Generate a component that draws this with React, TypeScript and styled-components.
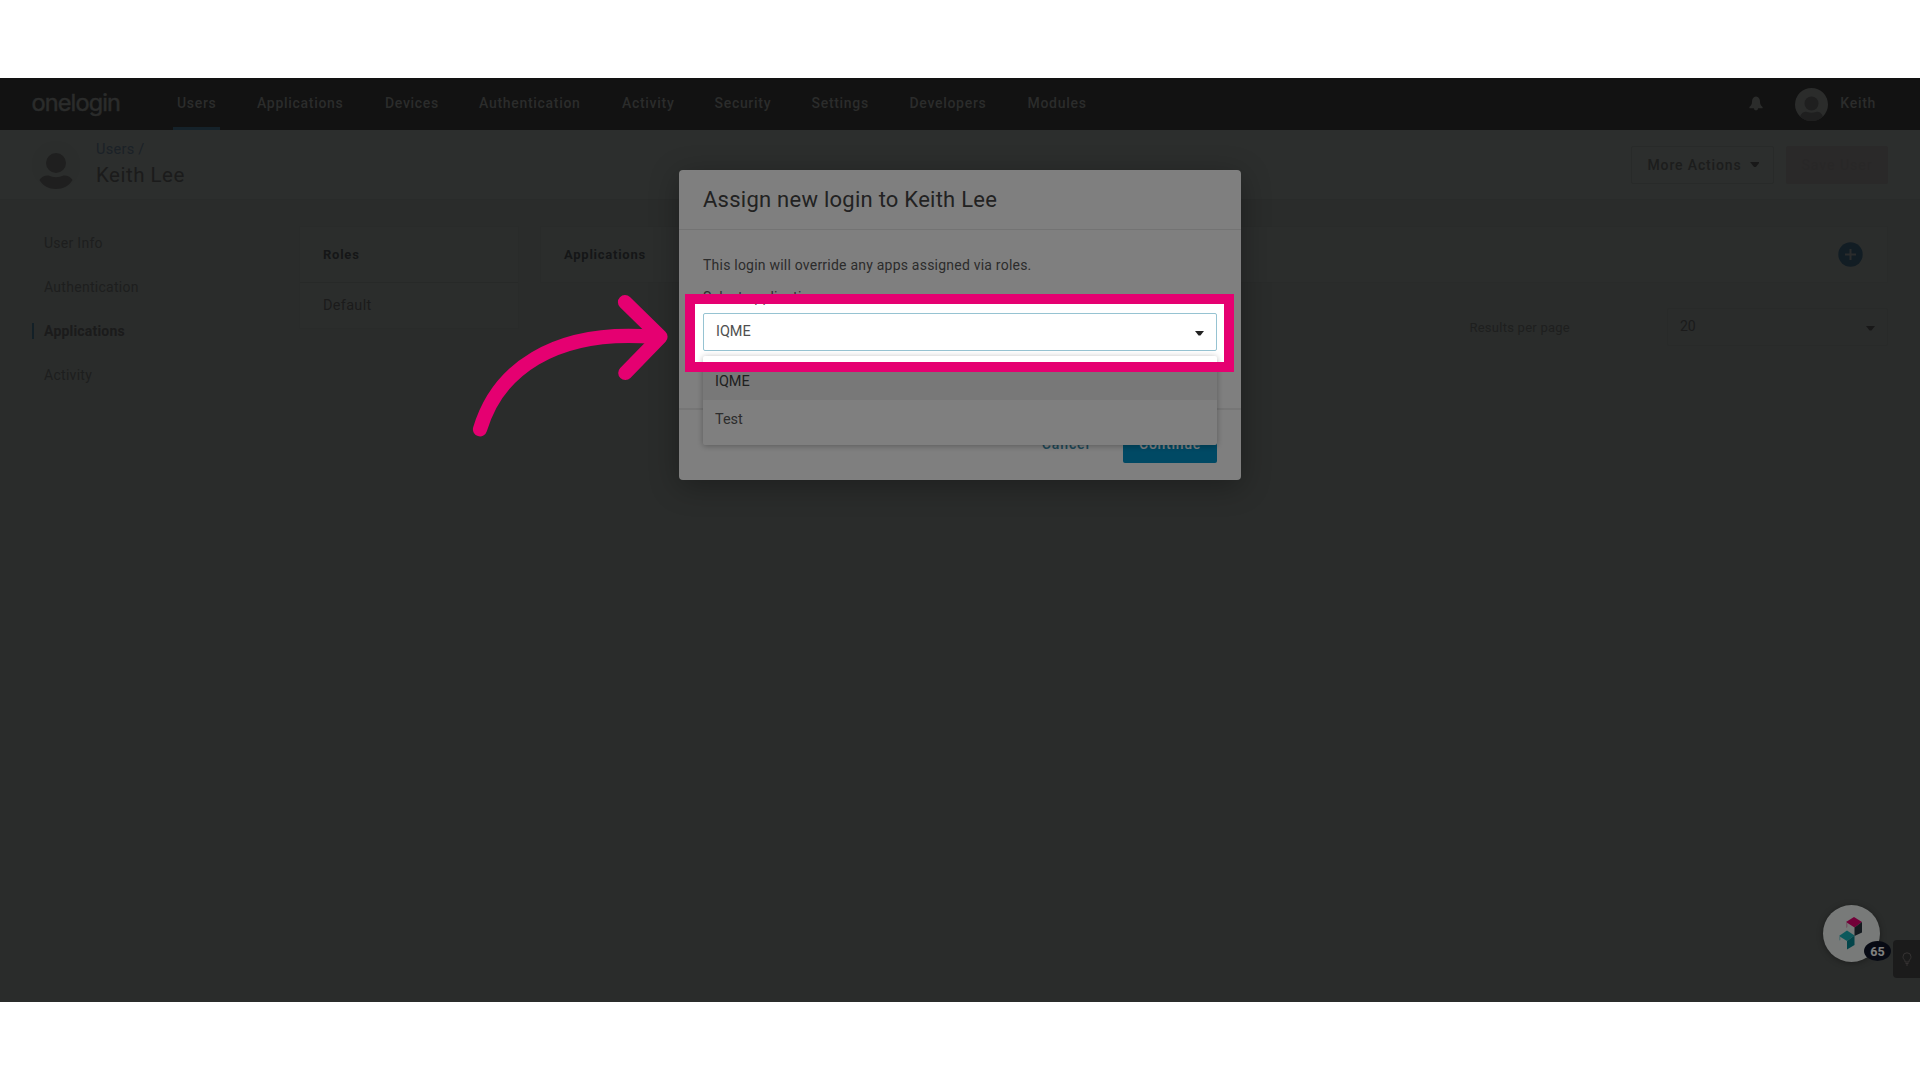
import React from "react";
import styled, { createGlobalStyle } from "styled-components";

const GlobalStyle = createGlobalStyle`
  * { box-sizing: border-box; }
  body { margin: 0; background: #fff; font-family: Roboto, "Liberation Sans", sans-serif; }
`;

const Page = styled.div`
  height: 1080px;
  padding: 78px 0;
  overflow: hidden;
`;

const Stage = styled.div`
  position: relative;
  height: 924px;
  overflow: hidden;
  background: #545856;
  display: flex;
  flex-direction: column;
`;

const TopBar = styled.header`
  height: 52px;
  background: #242424;
  display: flex;
  align-items: stretch;
  padding-left: 31px;
  padding-right: 44px;
  color: #565857;
`;

const Logo = styled.svg`
  width: 92px;
  height: 52px;
  flex: none;
  margin-right: 50px;
`;

const Nav = styled.nav`
  display: flex;
  gap: 33px;
  flex: 1;
`;

const NavItem = styled.a<{ $width: number; $active?: boolean }>`
  width: ${(p) => p.$width}px;
  padding: 0 0 0 4px;
  display: flex;
  align-items: center;
  font-size: 14px;
  font-weight: 500;
  letter-spacing: 0.7px;
  white-space: nowrap;
  border-bottom: 3px solid ${(p) => (p.$active ? "#2b4454" : "transparent")};
`;

const Account = styled.div`
  display: flex;
  align-items: center;
  font-size: 14px;
  font-weight: 500;
  letter-spacing: 0.7px;
  padding-bottom: 2px;
  svg { display: block; }
`;

const Bell = styled.svg`
  width: 14px;
  height: 15px;
  margin: 0 32px 0 0;
`;

const SmallAvatar = styled.svg`
  width: 33px;
  height: 33px;
  margin: 3px 12px 0 0;
`;

const SubHeader = styled.div`
  height: 70px;
  background: #585c5a;
  border-bottom: 1px solid #525654;
  display: flex;
  align-items: center;
  padding: 0 32px;
`;

const Avatar = styled.svg`
  width: 48px;
  height: 48px;
  margin-right: 16px;
`;

const Titles = styled.div`
  flex: 1;
  display: flex;
  flex-direction: column;
  padding-top: 1px;
`;

const Crumb = styled.div`
  font-size: 14.5px;
  line-height: 20px;
  letter-spacing: 0.3px;
  color: #36424e;
`;

const UserName = styled.div`
  font-size: 20.5px;
  line-height: 31px;
  letter-spacing: 0.5px;
  color: #363737;
`;

const Button = styled.div<{ $muted?: boolean }>`
  height: 38px;
  width: ${(p) => (p.$muted ? 102 : 143)}px;
  margin-left: ${(p) => (p.$muted ? 12 : 0)}px;
  padding-left: ${(p) => (p.$muted ? 0 : 2)}px;
  border: 1px solid ${(p) => (p.$muted ? "#555252" : "#515553")};
  background: ${(p) => (p.$muted ? "#555252" : "transparent")};
  color: ${(p) => (p.$muted ? "#504f4f" : "#383a39")};
  font-size: 14px;
  font-weight: ${(p) => (p.$muted ? 400 : 500)};
  letter-spacing: ${(p) => (p.$muted ? 1 : 0.85)}px;
  display: flex;
  align-items: center;
  justify-content: center;
  gap: 9px;
  border-radius: 2px;
`;

const Caret = styled.span<{ $color: string }>`
  width: 9px;
  height: 5px;
  background: ${(p) => p.$color};
  clip-path: polygon(0 0, 100% 0, 100% 10%, 60% 100%, 40% 100%, 0 10%);
`;

const Body = styled.div`
  flex: 1;
  display: flex;
  align-items: flex-start;
  padding: 26px 32px 0;
`;

const SideNav = styled.ul`
  list-style: none;
  margin: 9px 0 0;
  padding: 0;
  width: 267px;
  display: flex;
  flex-direction: column;
  gap: 28px;
`;

const SideItem = styled.li<{ $active?: boolean }>`
  height: 16px;
  line-height: 16px;
  padding-left: 10px;
  border-left: 2px solid ${(p) => (p.$active ? "#27404f" : "transparent")};
  color: ${(p) => (p.$active ? "#363636" : "#3b3d3c")};
  font-size: 14px;
  font-weight: ${(p) => (p.$active ? 700 : 400)};
  letter-spacing: ${(p) => (p.$active ? 0.2 : 0.28)}px;
`;

const Card = styled.section<{ $width: number }>`
  width: ${(p) => p.$width}px;
  border: 1px solid #525654;
  background: #575b59;
`;

const CardHead = styled.div`
  height: 55px;
  padding: 0 24px 0 23px;
  display: flex;
  align-items: center;
  justify-content: space-between;
  color: #2a2d2f;
  font-size: 13px;
  font-weight: 700;
  letter-spacing: 0.75px;
`;

const RoleRow = styled.div`
  height: 46px;
  border-top: 1px solid #4f5351;
  padding: 0 23px;
  line-height: 46px;
  font-size: 14.5px;
  letter-spacing: 0.3px;
  color: #363636;
`;

const Main = styled.div`
  margin-left: 21px;
`;

const Pager = styled.div`
  margin-top: 25px;
  display: flex;
  align-items: center;
  justify-content: flex-end;
`;

const PagerLabel = styled.span`
  font-size: 13px;
  letter-spacing: 0.25px;
  color: #3c3e3d;
  margin-right: 97px;
  padding-top: 1px;
`;

const PagerSelect = styled.div`
  width: 221px;
  height: 38px;
  border: 1px solid #505452;
  border-radius: 2px;
  padding: 0 12px;
  display: flex;
  align-items: center;
  justify-content: space-between;
  font-size: 14px;
  color: #363636;
  ${Caret} { margin-top: 2px; }
`;

const Value = styled.span`
  padding-bottom: 2px;
`;

const Modal = styled.div`
  position: absolute;
  left: 679px;
  top: 92px;
  width: 562px;
  height: 310px;
  background: #fff;
  border-radius: 4px;
  box-shadow: 0 6px 30px rgba(0, 0, 0, 0.3);
  color: #585858;
  display: flex;
  flex-direction: column;
`;

const ModalTitle = styled.h2`
  margin: 0;
  height: 60px;
  padding: 0 24px;
  line-height: 59px;
  font-size: 22px;
  font-weight: 400;
  letter-spacing: 0.25px;
  color: #444;
  border-bottom: 1px solid #e6e6e6;
`;

const ModalBody = styled.div`
  height: 180px;
  padding: 25px 24px 0;
  border-bottom: 2px solid #ececec;
  font-size: 14px;
  letter-spacing: 0.22px;
`;

const Line = styled.div<{ $top?: number }>`
  height: 20px;
  line-height: 20px;
  margin-top: ${(p) => p.$top ?? 0}px;
`;

const Select = styled.div`
  margin-top: 6px;
  height: 38px;
  border: 1px solid #96c3d2;
  border-radius: 2px;
  padding: 0 12px;
  display: flex;
  align-items: center;
  justify-content: space-between;
  color: #4f4f4f;
  font-size: 14.5px;
  letter-spacing: -0.05px;
  ${Caret} { margin-top: 2px; }
`;

const ModalFooter = styled.div`
  flex: 1;
  padding: 15px 24px 0;
  display: flex;
  justify-content: flex-end;
  gap: 33px;
  font-size: 14px;
  letter-spacing: 0.9px;
  font-weight: 500;
  line-height: 38px;
`;

const Cancel = styled.span`
  color: #3d8fae;
`;

const Continue = styled.span`
  width: 94px;
  height: 38px;
  background: #0093c9;
  color: #fff;
  border-radius: 2px;
  text-align: center;
  letter-spacing: 0.7px;
`;

const Menu = styled.div`
  position: absolute;
  left: 24px;
  top: 186px;
  width: 514px;
  height: 89px;
  padding: 6px 0;
  background: #fff;
  border-radius: 2px;
  box-shadow: 0 1px 6px rgba(0, 0, 0, 0.3);
`;

const Option = styled.div<{ $selected?: boolean }>`
  height: 38px;
  line-height: 39px;
  padding-left: 12px;
  font-size: 14.5px;
  letter-spacing: -0.05px;
  background: ${(p) => (p.$selected ? "#f0f0f0" : "transparent")};
  color: ${(p) => (p.$selected ? "#404040" : "#5a5a5a")};
`;

const Spotlight = styled.div`
  position: absolute;
  left: 685px;
  top: 216px;
  width: 549px;
  height: 78px;
  border: 10px solid #e50071;
  box-shadow: 0 0 0 2000px rgba(0, 0, 0, 0.5);
`;

const Arrow = styled.svg`
  position: absolute;
  left: 460px;
  top: 202px;
  width: 240px;
  height: 170px;
`;

const ChatBubble = styled.div`
  position: absolute;
  left: 1823px;
  top: 827px;
  width: 57px;
  height: 57px;
  border-radius: 50%;
  background: #f0f4f2;
  box-shadow: 0 1px 6px rgba(0, 0, 0, 0.35);
`;

const Count = styled.span`
  position: absolute;
  left: 41px;
  top: 36px;
  width: 27px;
  height: 20px;
  border-radius: 50%;
  background: #0f1528;
  color: #fff;
  font-size: 12.5px;
  font-weight: 700;
  line-height: 21px;
  text-align: center;
`;

const Tip = styled.div`
  position: absolute;
  right: 0;
  top: 862px;
  width: 27px;
  height: 38px;
  border-radius: 4px 0 0 4px;
  background: #363737;
  display: flex;
  align-items: center;
  justify-content: center;
`;

const NAV = [
  { label: "Users", width: 47, active: true },
  { label: "Applications", width: 95 },
  { label: "Devices", width: 61 },
  { label: "Authentication", width: 110 },
  { label: "Activity", width: 59.5 },
  { label: "Security", width: 64 },
  { label: "Settings", width: 65 },
  { label: "Developers", width: 85 },
  { label: "Modules", width: 67 },
];

const SIDE = ["User Info", "Authentication", "Applications", "Activity"];

export default function App() {
  return (
    <Page>
      <GlobalStyle />
      <Stage>
        <TopBar>
          <Logo viewBox="0 0 92 52">
            <text x="0.5" y="32.500" fill="currentColor" stroke="currentColor" strokeWidth="0.500"
              fontFamily="Inter, sans-serif" fontSize="23.500" textLength="89.500">onelogin</text>
          </Logo>
          <Nav>
            {NAV.map((n) => (
              <NavItem key={n.label} $width={n.width} $active={n.active}>{n.label}</NavItem>
            ))}
          </Nav>
          <Account>
            <Bell viewBox="0 0 14 15" fill="#565857">
              <path d="M7 0.5C4.2 0.8 3 3 3 5.6C3 8.6 2 9.6 0.4 11V12.2H13.6V11C12 9.6 11 8.6 11 5.6C11 3 9.8 0.8 7 0.5Z" />
              <path d="M4.8 12H9.2A2.2 2.4 0 0 1 4.8 12Z" />
            </Bell>
            <SmallAvatar viewBox="0 0 33 33">
              <circle cx="16.5" cy="16.5" r="16.5" fill="#565857" />
              <circle cx="16.5" cy="15.5" r="7" fill="#3e3e3e" />
              <path d="M5 28.4C7 24 10 23 12 24Q16.5 25.5 21 24C23 23 26 24 28 28.4A16.5 16.5 0 0 1 5 28.4Z" fill="#3e3e3e" />
            </SmallAvatar>
            Keith
          </Account>
        </TopBar>
        <SubHeader>
          <Avatar viewBox="0 0 48 48">
            <circle cx="24" cy="24" r="24" fill="#575b59" />
            <circle cx="24" cy="22" r="10" fill="#3e3e3e" />
            <path d="M7.4 39C9 36 13 34 16.5 34.5Q24 38 31.500 34.500C35 34 39 36 40.600 39C37 45 31 48 24 48S11 45 7.400 39Z" fill="#3e3e3e" />
          </Avatar>
          <Titles>
            <Crumb>Users /</Crumb>
            <UserName>Keith Lee</UserName>
          </Titles>
          <Button>More Actions <Caret $color="#303030" /></Button>
          <Button $muted>Save User</Button>
        </SubHeader>
        <Body>
          <SideNav>
            {SIDE.map((s) => (
              <SideItem key={s} $active={s === "Applications"}>{s}</SideItem>
            ))}
          </SideNav>
          <Card $width={220}>
            <CardHead>Roles</CardHead>
            <RoleRow>Default</RoleRow>
          </Card>
          <Main>
            <Card $width={1348}>
              <CardHead>
                Applications
                <svg width="25" height="25" viewBox="0 0 25 25">
                  <circle cx="12.500" cy="12.500" r="12.200" fill="#253a48" />
                  <path d="M12.500 7V18M7 12.500H18" stroke="#575959" strokeWidth="2" />
                </svg>
              </CardHead>
            </Card>
            <Pager>
              <PagerLabel>Results per page</PagerLabel>
              <PagerSelect><Value>20</Value> <Caret $color="#303030" /></PagerSelect>
            </Pager>
          </Main>
        </Body>

        <ChatBubble>
          <svg width="57" height="57" viewBox="0 0 57 57">
            <path d="M23 17L31 12L39 17L31.500 22.500Z" fill="#e50071" />
            <path d="M31.500 22.500L39 17V27.500L31.500 31Z" fill="#28343e" />
            <path d="M23 17L24.500 18.500V22L23 23Z" fill="#e6b4cb" />
            <path d="M16 31L24 25.500L31.500 30.500L24 36Z" fill="#18b3b8" />
            <path d="M24 36L31.500 30.500V40L24 44.500Z" fill="#078a94" />
            <path d="M16 31L17.500 32.500V35L16 35.500Z" fill="#a3dcdc" />
          </svg>
          <Count>65</Count>
        </ChatBubble>
        <Tip>
          <svg width="10" height="14" viewBox="0 0 10 14" fill="none" stroke="#6a6564">
            <path d="M3 8.500C1.500 7.500 1 6 1 4.800A4 4 0 0 1 9 4.800C9 6 8.500 7.500 7 8.500V10H3Z" />
            <path d="M3.500 11.500H6.500M4 13H6" />
          </svg>
        </Tip>

        <Modal>
          <ModalTitle>Assign new login to Keith Lee</ModalTitle>
          <ModalBody>
            <Line>This login will override any apps assigned via roles.</Line>
            <Line $top={12}>Select application</Line>
            <Select><Value>IQME</Value> <Caret $color="#222" /></Select>
          </ModalBody>
          <ModalFooter>
            <Cancel>Cancel</Cancel>
            <Continue>Continue</Continue>
          </ModalFooter>
          <Menu>
            <Option $selected>IQME</Option>
            <Option>Test</Option>
          </Menu>
        </Modal>
        <Spotlight />
        <Arrow viewBox="0 0 240 170" fill="none" stroke="#e50071" strokeWidth="14.200" strokeLinecap="round" strokeLinejoin="round">
          <path d="M20 149.300C37 92 92 48 195 57" />
          <path d="M165 22.200L200.500 56.900L165.300 93" />
        </Arrow>
      </Stage>
    </Page>
  );
}
